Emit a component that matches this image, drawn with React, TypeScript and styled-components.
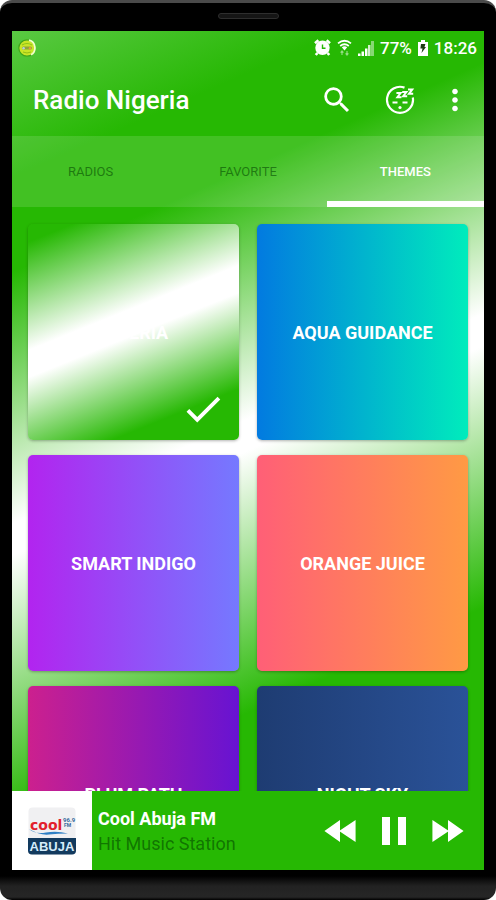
import React from "react";
import styled, { createGlobalStyle, css } from "styled-components";

const GREEN = "#26b803";
const MUTED = "rgba(0, 60, 0, 0.55)";

const GlobalStyle = createGlobalStyle`
  *, *::before, *::after { box-sizing: border-box; }
  body { margin: 0; background: #fff; }
`;

const Phone = styled.div`
  display: flex;
  flex-direction: column;
  height: 100vh;
  padding: 0 12px;
  border-radius: 12px;
  border-top: 3px solid #4a4a4a;
  background: linear-gradient(to bottom, #000 calc(100% - 24px), #222 calc(100% - 14px), #262626 calc(100% - 3px), #000);
  font-family: Roboto, "Liberation Sans", sans-serif;
  color: #fff;
  overflow: hidden;
`;

const Earpiece = styled.div`
  flex: none;
  height: 28px;
  display: flex;
  justify-content: center;
  padding-top: 10px;

  &::before {
    content: "";
    width: 61px;
    height: 6px;
    border: 1px solid #2e2e2e;
    border-radius: 3px;
    background: #151515;
  }
`;

const Screen = styled.div`
  flex: 1;
  min-height: 0;
  margin-bottom: 30px;
  display: flex;
  flex-direction: column;
  background: linear-gradient(156deg, #5ac943 0%, ${GREEN} 14%, ${GREEN} 23%, #fff 47%, #fff 50%, ${GREEN} 75%);
`;

const StatusBar = styled.div`
  flex: none;
  display: flex;
  align-items: center;
  height: 33px;
  padding: 0 7px 0 6px;
  font-size: 17px;
  font-weight: 500;
`;

const StatusItems = styled.div`
  margin-left: auto;
  display: flex;
  align-items: center;
  gap: 6px;
`;

const Toolbar = styled.header`
  flex: none;
  display: flex;
  align-items: center;
  height: 72px;
  padding: 0 20px 0 21px;
`;

const Title = styled.h1`
  flex: 1;
  margin: 0;
  font-size: 26px;
  font-weight: 500;
`;

const Actions = styled.div`
  display: flex;
  align-items: center;
  gap: 31px;
`;

const BareButton = styled.button`
  border: 0;
  padding: 0;
  background: none;
  color: inherit;
  font-family: inherit;
  cursor: pointer;
`;

const IconButton = styled(BareButton)`
  display: grid;
  place-items: center;
  svg { display: block; fill: currentColor; }
`;

const Overflow = styled(IconButton)`
  margin: 0 -8px;
`;

const Tabs = styled.nav`
  flex: none;
  display: flex;
  height: 71px;
  background: rgba(255, 255, 255, 0.13);
`;

const Tab = styled(BareButton)<{ $active?: boolean }>`
  flex: 1;
  padding-top: 6px;
  border-bottom: 6px solid transparent;
  font-size: 13px;
  color: ${MUTED};
  ${(p) =>
    p.$active &&
    css`
      color: #fff;
      font-weight: 500;
      border-bottom-color: #fff;
    `}
`;

const Grid = styled.main`
  flex: 1;
  min-height: 0;
  overflow: hidden;
  display: grid;
  grid-template-columns: 1fr 1fr;
  align-content: start;
  gap: 15px 18px;
  padding: 17px 16px 0;
`;

const Card = styled(BareButton)<{ $fill: string }>`
  position: relative;
  aspect-ratio: 211 / 216;
  border-radius: 5px;
  background: ${(p) => p.$fill};
  box-shadow: 0 1px 3px rgba(0, 0, 0, 0.3);
  font-size: 18px;
  font-weight: 700;
`;

const Check = styled.svg`
  position: absolute;
  right: 13px;
  bottom: 8px;
  fill: #fff;
`;

const Player = styled.footer`
  flex: none;
  display: flex;
  align-items: center;
  height: 79px;
  padding-right: 14px;
  background: ${GREEN};
`;

const Cover = styled.div`
  display: grid;
  place-items: center;
  width: 80px;
  height: 79px;
  background: #fff;
`;

const Track = styled.div`
  flex: 1;
  min-width: 0;
  padding-left: 6px;
  font-size: 18px;
  line-height: 25px;
  white-space: nowrap;
`;

const Station = styled.div`
  font-weight: 700;
`;

const Genre = styled.div`
  color: ${MUTED};
`;

const Controls = styled.div`
  display: flex;
  align-items: center;
  gap: 8px;
`;

const themes = [
  { name: "NIGERIA", fill: `linear-gradient(158deg, ${GREEN} 6%, #fff 42%, #fff 51%, ${GREEN} 83%)`, selected: true },
  { name: "AQUA GUIDANCE", fill: "linear-gradient(to right, #027ae0, #00ecbc)" },
  { name: "SMART INDIGO", fill: "linear-gradient(to right, #b224ef, #7579ff)" },
  { name: "ORANGE JUICE", fill: "linear-gradient(to right, #ff5f77, #ff9a44)" },
  { name: "PLUM PATH", fill: "linear-gradient(to right, #cc208e, #6713d2)" },
  { name: "NIGHT SKY", fill: "linear-gradient(to right, #1e3c72, #2a5298)" },
];

const AppBadge = () => (
  <svg width="18" height="18" viewBox="0 0 18 18" aria-hidden="true">
    <circle cx="9" cy="9" r="8.2" fill="#c9e526" stroke="#3fa51b" strokeWidth="1.2" />
    <path d="M11 1.200a8 8 0 0 1 2 14.600" fill="none" stroke="#f1ffc9" strokeWidth="1.8" />
    <path d="M4 6q5-3 10 0" fill="none" stroke="#8ec31a" strokeWidth="1.2" />
    <rect x="4" y="7.6" width="10" height="3" rx="1.5" fill="#8ea53a" />
    <circle cx="5.6" cy="9.2" r="1.2" fill="#b7cfe0" />
    <circle cx="12" cy="9.2" r="1.2" fill="#e59b3a" />
    <path d="M5 13q4 2 8 0" fill="none" stroke="#91bd17" />
  </svg>
);

const AlarmIcon = () => (
  <svg width="17" height="17" viewBox="0 0 17 17" aria-hidden="true">
    <path d="M1 4.200 4.400 1.200M16 4.200 12.600 1.200M3.400 14l-1.600 2M13.600 14l1.600 2" stroke="#fff" strokeWidth="2.600" />
    <circle cx="8.5" cy="8.8" r="7.2" fill="#fff" />
    <path d="M8.500 5.500v3.700H11.500" fill="none" stroke={GREEN} strokeWidth="1.4" />
  </svg>
);

const WifiIcon = () => (
  <svg width="15" height="17" viewBox="0 0 15 17" aria-hidden="true">
    <path d="M1 4.400q6.500-5.400 13 0M3.200 7q4.300-3.400 8.600 0" fill="none" stroke="#fff" strokeWidth="1.8" />
    <path d="M7.500 11.400 4.800 8.200q2.700-1.800 5.400 0z" fill="#fff" />
    <path d="M5 12v4M3.600 13.600 5 12l1.400 1.600M10 16v-4M8.600 14.400 10 16l1.400-1.600" fill="none" stroke="#fff" strokeOpacity=".5" strokeWidth="1.2" />
  </svg>
);

const SignalIcon = () => (
  <svg width="16" height="16" viewBox="0 0 16 16" fill="#fff" aria-hidden="true">
    <path d="M0 13.500h2.500V16H0zM3.500 11.500H6V16H3.500zM7 8.500h2.500V16H7z" />
    <path d="M10 5h2.500v11H10z" fillOpacity=".8" />
    <path d="M13 1h3v15h-3z" fillOpacity=".45" />
  </svg>
);

const BatteryIcon = () => (
  <svg width="10" height="16" viewBox="0 0 10 16" aria-hidden="true">
    <path d="M3 0h4v2h3v14H0V2h3z" fill="#fff" />
    <path d="M3 4h4.400L6.500 7H8l-4.500 6 1-4.500H2.400z" fill="#1d3b12" />
  </svg>
);

const SleepIcon = () => (
  <svg width="30" height="30" viewBox="0 0 30 30" aria-hidden="true">
    <path d="M19.500 2.600A13 13 0 1 0 27.800 12.500" fill="none" stroke="#fff" strokeWidth="2.2" />
    <path
      d="M11.400 8h4.200l-3.200 4.200h4M17.200 7h4.200l-3.200 4.200h4M23 4.600h4.200L24 8.800h4.200"
      fill="none"
      stroke="#fff"
      strokeWidth="2"
    />
    <path d="M7.500 17.400h5M17.500 17.400h5" fill="none" stroke="#fff" strokeWidth="2" />
    <circle cx="15" cy="22.5" r="1.6" fill="#fff" />
  </svg>
);

const StationLogo = () => (
  <svg width="48" height="48" viewBox="0 0 48 48" role="img" aria-label="Cool 96.9 FM Abuja">
    <rect x=".5" y=".5" width="47" height="47" rx="4" fill="#f0f0f2" />
    <path d="M0 31h48v12.500a4 4 0 0 1-4 4H4a4 4 0 0 1-4-4z" fill="#123a5e" />
    <path d="M1 22q6 5.500 17 3.500T40 26.500q-10 0-19 1T1 22z" fill="#2f7fc4" />
    <text x="2" y="23" fontFamily="DejaVu Sans, sans-serif" fontSize="14" fontWeight="700" fill="#e2202c">cool</text>
    <text x="35" y="15" fontFamily="Roboto, sans-serif" fontSize="6" fontWeight="700" fill="#35699c">96.9</text>
    <text x="36" y="20" fontFamily="Roboto, sans-serif" fontSize="5" fontWeight="700" fill="#35699c">FM</text>
    <text x="24" y="44" textAnchor="middle" fontFamily="Liberation Sans, sans-serif" fontSize="13" fontWeight="700" fill="#d5ecfb">
      ABUJA
    </text>
  </svg>
);

export default function App() {
  return (
    <>
      <GlobalStyle />
      <Phone>
        <Earpiece />
        <Screen>
          <StatusBar>
            <AppBadge />
            <StatusItems>
              <AlarmIcon />
              <WifiIcon />
              <SignalIcon />
              <span>77%</span>
              <BatteryIcon />
              <span>18:26</span>
            </StatusItems>
          </StatusBar>
          <Toolbar>
            <Title>Radio Nigeria</Title>
            <Actions>
              <IconButton aria-label="Search">
                <svg width="34" height="34" viewBox="0 0 24 24">
                  <path d="M15.500 14h-.79l-.28-.27A6.471 6.471 0 0 0 16 9.500 6.500 6.500 0 1 0 9.500 16c1.610 0 3.090-.59 4.230-1.570l.27.28v.79l5 4.990L20.490 19l-4.990-5zm-6 0C7.010 14 5 11.990 5 9.500S7.010 5 9.500 5 14 7.010 14 9.500 11.990 14 9.500 14z" />
                </svg>
              </IconButton>
              <IconButton aria-label="Sleep timer">
                <SleepIcon />
              </IconButton>
              <Overflow aria-label="More options">
                <svg width="34" height="34" viewBox="0 0 24 24">
                  <path d="M12 8c1.100 0 2-.9 2-2s-.9-2-2-2-2 .9-2 2 .9 2 2 2zm0 2c-1.100 0-2 .9-2 2s.9 2 2 2 2-.9 2-2-.9-2-2-2zm0 6c-1.100 0-2 .9-2 2s.9 2 2 2 2-.9 2-2-.9-2-2-2z" />
                </svg>
              </Overflow>
            </Actions>
          </Toolbar>
          <Tabs>
            <Tab>RADIOS</Tab>
            <Tab>FAVORITE</Tab>
            <Tab $active aria-current="page">THEMES</Tab>
          </Tabs>
          <Grid>
            {themes.map((t) => (
              <Card key={t.name} $fill={t.fill} aria-pressed={!!t.selected}>
                {t.name}
                {t.selected && (
                  <Check width="46" height="46" viewBox="0 0 24 24" aria-hidden="true">
                    <path d="M9 16.170 4.830 12l-1.420 1.410L9 19 21 7l-1.410-1.410z" />
                  </Check>
                )}
              </Card>
            ))}
          </Grid>
          <Player>
            <Cover>
              <StationLogo />
            </Cover>
            <Track>
              <Station>Cool Abuja FM</Station>
              <Genre>Hit Music Station</Genre>
            </Track>
            <Controls>
              <IconButton aria-label="Previous">
                <svg width="44" height="44" viewBox="0 0 24 24">
                  <path d="M12 18V6l-8.500 6 8.500 6zm-.5-6 9 6V6l-9 6z" />
                </svg>
              </IconButton>
              <IconButton aria-label="Pause">
                <svg width="48" height="48" viewBox="0 0 24 24">
                  <path d="M6 19h4V5H6v14zm8-14v14h4V5h-4z" />
                </svg>
              </IconButton>
              <IconButton aria-label="Next">
                <svg width="44" height="44" viewBox="0 0 24 24">
                  <path d="m3.500 18 9-6-9-6v12zM12 6v12l8.500-6L12 6z" />
                </svg>
              </IconButton>
            </Controls>
          </Player>
        </Screen>
      </Phone>
    </>
  );
}
